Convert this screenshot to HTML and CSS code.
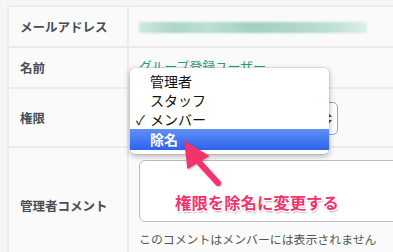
FILE: index.html
```html
<!DOCTYPE html>
<html lang="ja">
<head>
    <meta charset="UTF-8">
    <title>メンバー編集</title>
    <link rel="stylesheet" href="styles.css">
</head>
<body>
    <div class="detail">
        <div class="label row-1">メールアドレス</div>
        <div class="value row-1"><div class="email-blur"></div></div>

        <div class="label row-2">名前</div>
        <div class="value row-2"><a href="#" class="user-link">グループ登録ユーザー</a></div>

        <div class="label row-3">権限</div>
        <div class="value row-3">
            <div class="select-box">
                <svg class="select-arrows" width="7" height="11" viewBox="0 0 7 11">
                    <path d="M3.5 0 L7 4 L0 4 Z M3.5 11 L7 7 L0 7 Z" fill="#444"/>
                </svg>
            </div>
        </div>

        <div class="label row-4">管理者コメント</div>
        <div class="value row-4">
            <div class="comment-box"></div>
            <p class="hint">このコメントはメンバーには表示されません</p>
        </div>
    </div>

    <!-- open select menu -->
    <ul class="select-menu">
        <li>管理者</li>
        <li>スタッフ</li>
        <li class="checked"><span class="check">✓</span>メンバー</li>
        <li class="selected">除名</li>
    </ul>

    <!-- annotation -->
    <svg class="note-arrow" width="393" height="252" viewBox="0 0 393 252">
        <line x1="197" y1="160" x2="218" y2="183" stroke="#f2346d" stroke-width="6" stroke-linecap="round"/>
        <polygon points="185,142 188,168 208,156" fill="#f2346d" stroke="#f2346d" stroke-width="1.5" stroke-linejoin="round"/>
    </svg>
    <div class="note-text">権限を除名に変更する</div>
</body>
</html>
```

FILE: styles.css
```css
* {
    margin: 0;
    padding: 0;
    box-sizing: border-box;
}

body {
    font-family: "Noto Sans CJK JP", "Noto Sans", sans-serif;
    background-color: #f6f6f6;
    color: #555;
    width: 393px;
    height: 252px;
    overflow: hidden;
    position: relative;
}

/* Detail table */
.detail {
    margin: 5px 0 0 7px;
    display: grid;
    grid-template-columns: 120px 1fr;
    border-top: 2px solid #ececec;
    border-left: 2px solid #ececec;
}

.label,
.value {
    background-color: #fafafa;
    border-right: 2px solid #ececec;
    border-bottom: 2px solid #ececec;
}

.label {
    display: flex;
    align-items: center;
    padding-left: 11px;
    font-size: 12.5px;
    font-weight: bold;
    color: #484d55;
}

.value {
    padding-left: 10px;
}

.row-1 { height: 41px; }
.row-2 { height: 41px; }
.row-3 { height: 59px; }
.row-4 { height: 116px; }

.row-1.value,
.row-2.value,
.row-3.value {
    display: flex;
    align-items: center;
}

/* Blurred email */
.email-blur {
    width: 228px;
    height: 11px;
    margin-top: 2px;
    background: linear-gradient(90deg, #cfe8df 0%, #acd6c6 15%, #bbdfd2 30%, #a2d1bf 50%, #acd5c6 65%, #bfe0d4 85%, #dcefe8 100%);
    filter: blur(1px);
}

.user-link {
    font-size: 12.8px;
    color: #1e9c88;
    text-decoration: none;
    white-space: nowrap;
    margin-bottom: 4px;
}

/* Select */
.select-box {
    position: relative;
    width: 199px;
    height: 33px;
    margin-top: 2px;
    border: 1.5px solid #7fade6;
    border-radius: 5px;
    background-color: #fff;
}

.select-arrows {
    position: absolute;
    right: 5px;
    top: 10px;
}

/* Comment */
.row-4.value {
    padding-top: 12px;
}

.comment-box {
    height: 62px;
    width: 270px;
    border: 1.5px solid #bcbfc2;
    border-radius: 6px;
    background-color: #fff;
}

.hint {
    margin-top: 8px;
    font-size: 11.9px;
    color: #555;
    white-space: nowrap;
}

/* Open select menu */
.select-menu {
    position: absolute;
    left: 130px;
    top: 68px;
    width: 199px;
    padding: 4px 0 4px;
    list-style: none;
    background-color: #fff;
    border-radius: 5px;
    box-shadow: 0 2px 6px rgba(0, 0, 0, 0.3), 0 0 0 0.5px rgba(0, 0, 0, 0.12);
    font-size: 14px;
    color: #111;
    overflow: hidden;
}

.select-menu li {
    position: relative;
    height: 19px;
    line-height: 19px;
    padding-left: 20px;
}

.select-menu .check {
    position: absolute;
    left: 6px;
    font-size: 13px;
}

.select-menu .selected {
    height: 21px;
    line-height: 20px;
    color: #fff;
    font-weight: bold;
    background: linear-gradient(#5f90f6, #2d62ee);
}

/* Annotation */
.note-arrow {
    position: absolute;
    left: 0;
    top: 0;
    filter: drop-shadow(1px 1px 1px rgba(0, 0, 0, 0.25));
}

.note-text {
    position: absolute;
    left: 175px;
    top: 190px;
    font-size: 16.4px;
    font-weight: bold;
    color: #f2346d;
    white-space: nowrap;
    text-shadow: 1px 0 0 #fff, -1px 0 0 #fff, 0 1px 0 #fff, 0 -1px 0 #fff,
        1px 1px 0 #fff, -1px -1px 0 #fff, 1px -1px 0 #fff, -1px 1px 0 #fff,
        1px 2px 2px rgba(0, 0, 0, 0.35);
}
```
